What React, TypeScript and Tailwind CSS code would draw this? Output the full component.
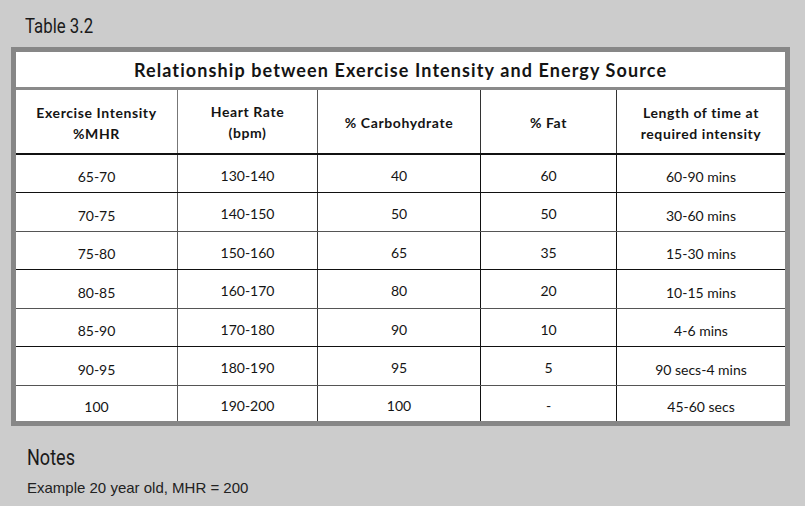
const rows = [
  ["65-70", "130-140", "40", "60", "60-90 mins"],
  ["70-75", "140-150", "50", "50", "30-60 mins"],
  ["75-80", "150-160", "65", "35", "15-30 mins"],
  ["80-85", "160-170", "80", "20", "10-15 mins"],
  ["85-90", "170-180", "90", "10", "4-6 mins"],
  ["90-95", "180-190", "95", "5", "90 secs-4 mins"],
  ["100", "190-200", "100", "-", "45-60 secs"],
];

// row heights incl. the top rule
const rowHeights = ["h-[39px]", "h-[39px]", "h-[38px]", "h-[39px]", "h-[38px]", "h-[39px]", "h-[36px]"];

const cols = "grid grid-cols-[161px_140px_163px_136px_169px]";

const App = () => {
  return (
    <div className="w-[805px] h-[506px] bg-[#cccccc] overflow-hidden">
      <div className="pl-[25px] pt-[13px] h-[47px] text-[21px] leading-[26px] text-[#1a1a1a] font-['Roboto',sans-serif]">
        <span className="inline-block origin-left scale-x-[0.8]">Table 3.2</span>
      </div>

      <div className="ml-[11px] w-[779px] border-[5px] border-[#878787] bg-white font-['Lato',sans-serif] text-[#141414]">
        {/* title */}
        <div className="h-[38px] flex items-center justify-center text-[18px] font-bold tracking-[1.1px] border-b-[3px] border-[#8a8a8a] pt-[1px]">
          Relationship between Exercise Intensity and Energy Source
        </div>

        {/* header */}
        <div className={`${cols} h-[63px] text-[14px] font-bold leading-[21px] tracking-[0.6px]`}>
          <div className="flex items-center justify-center text-center pt-[2px]">
            Exercise Intensity
            <br />
            %MHR
          </div>
          <div className="flex items-center justify-center text-center border-l border-[#777]">
            Heart Rate
            <br />
            (bpm)
          </div>
          <div className="flex items-center justify-center text-center border-l border-[#555] pt-[2px]">% Carbohydrate</div>
          <div className="flex items-center justify-center text-center border-l border-[#333] pt-[2px]">% Fat</div>
          <div className="flex items-center justify-center text-center border-l border-[#333] pt-[2px]">
            Length of time at
            <br />
            required intensity
          </div>
        </div>

        {/* data rows */}
        {rows.map((r, i) => (
          <div
            key={i}
            className={`${cols} ${rowHeights[i]} text-[14px] ${i === 0 ? "border-t-2 border-[#111]" : i % 2 === 0 ? "border-t border-[#555]" : "border-t border-[#111]"}`}
          >
            <div className="flex items-center justify-center pt-[6px]">{r[0]}</div>
            <div className="flex items-center justify-center border-l border-[#555] pt-[3px]">{r[1]}</div>
            <div className="flex items-center justify-center border-l border-[#333] pt-[3px]">{r[2]}</div>
            <div className="flex items-center justify-center border-l border-[#111] pt-[3px]">{r[3]}</div>
            <div className="flex items-center justify-center border-l border-[#111] pt-[6px]">{r[4]}</div>
          </div>
        ))}
      </div>

      <div className="pl-[27px] pt-[19px] text-[22px] leading-[26px] text-[#1a1a1a] font-['Roboto',sans-serif]">
        <span className="inline-block origin-left scale-x-[0.82]">Notes</span>
      </div>
      <div className="pl-[27px] pt-[8px] text-[15px] leading-[18px] text-[#222] font-['Liberation_Sans',sans-serif]">
        Example 20 year old, MHR = 200
      </div>
    </div>
  );
};

export default App;
